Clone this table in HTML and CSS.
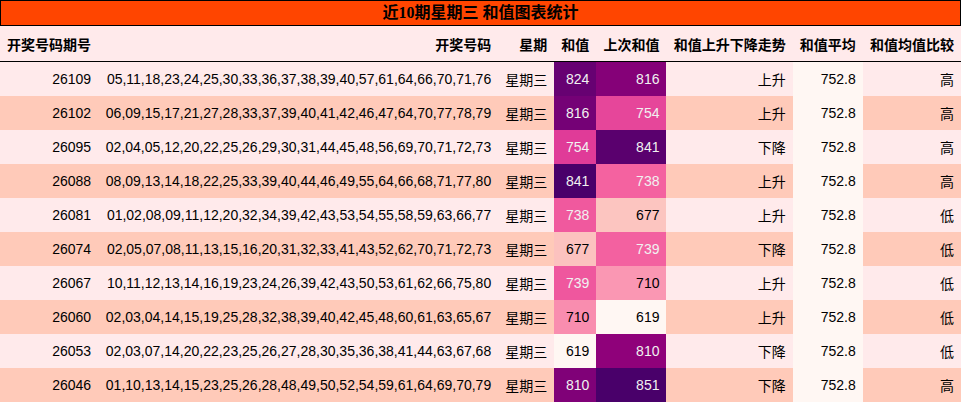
FILE: index.html
```html
<!DOCTYPE html>
<html lang="zh">
<head>
<meta charset="utf-8">
<title>近10期星期三 和值图表统计</title>
<link rel="stylesheet" href="styles.css">
</head>
<body>
<table class="stats">
  <thead>
    <tr><th class="title" colspan="8">近10期星期三 和值图表统计</th></tr>
    <tr class="head">
      <th class="left">开奖号码期号</th>
      <th>开奖号码</th>
      <th>星期</th>
      <th>和值</th>
      <th>上次和值</th>
      <th>和值上升下降走势</th>
      <th>和值平均</th>
      <th>和值均值比较</th>
    </tr>
  </thead>
  <tbody>
    <tr><td>26109</td><td>05,11,18,23,24,25,30,33,36,37,38,39,40,57,61,64,66,70,71,76</td><td>星期三</td><td class="light" style="background:#670172">824</td><td class="light" style="background:#850178">816</td><td>上升</td><td class="avg">752.8</td><td>高</td></tr>
    <tr><td>26102</td><td>06,09,15,17,21,27,28,33,37,39,40,41,42,46,47,64,70,77,78,79</td><td>星期三</td><td class="light" style="background:#750176">816</td><td class="light" style="background:#e6469a">754</td><td>上升</td><td class="avg">752.8</td><td>高</td></tr>
    <tr><td>26095</td><td>02,04,05,12,20,22,25,26,29,30,31,44,45,48,56,69,70,71,72,73</td><td>星期三</td><td class="light" style="background:#e03b98">754</td><td class="light" style="background:#5a006e">841</td><td>下降</td><td class="avg">752.8</td><td>高</td></tr>
    <tr><td>26088</td><td>08,09,13,14,18,22,25,33,39,40,44,46,49,55,64,66,68,71,77,80</td><td>星期三</td><td class="light" style="background:#49006a">841</td><td class="light" style="background:#f462a0">738</td><td>上升</td><td class="avg">752.8</td><td>高</td></tr>
    <tr><td>26081</td><td>01,02,08,09,11,12,20,32,34,39,42,43,53,54,55,58,59,63,66,77</td><td>星期三</td><td class="light" style="background:#f0599e">738</td><td style="background:#fcc5c0">677</td><td>上升</td><td class="avg">752.8</td><td>低</td></tr>
    <tr><td>26074</td><td>02,05,07,08,11,13,15,16,20,31,32,33,41,43,52,62,70,71,72,73</td><td>星期三</td><td style="background:#fcc2bf">677</td><td class="light" style="background:#f361a0">739</td><td>下降</td><td class="avg">752.8</td><td>低</td></tr>
    <tr><td>26067</td><td>10,11,12,13,14,16,19,23,24,26,39,42,43,50,53,61,62,66,75,80</td><td>星期三</td><td class="light" style="background:#ef579e">739</td><td style="background:#fa97b3">710</td><td>上升</td><td class="avg">752.8</td><td>低</td></tr>
    <tr><td>26060</td><td>02,03,04,14,15,19,25,28,32,38,39,40,42,45,48,60,61,63,65,67</td><td>星期三</td><td style="background:#f98daf">710</td><td style="background:#fff7f3">619</td><td>上升</td><td class="avg">752.8</td><td>低</td></tr>
    <tr><td>26053</td><td>02,03,07,14,20,22,23,25,26,27,28,30,35,36,38,41,44,63,67,68</td><td>星期三</td><td style="background:#fff7f3">619</td><td class="light" style="background:#8f017a">810</td><td>下降</td><td class="avg">752.8</td><td>低</td></tr>
    <tr><td>26046</td><td>01,10,13,14,15,23,25,26,28,48,49,50,52,54,59,61,64,69,70,79</td><td>星期三</td><td class="light" style="background:#800178">810</td><td class="light" style="background:#49006a">851</td><td>下降</td><td class="avg">752.8</td><td>高</td></tr>
  </tbody>
</table>
</body>
</html>
```

FILE: styles.css
```css
html, body {
  margin: 0;
  padding: 0;
  background: #ffffff;
}

.stats {
  width: 961px;
  border-collapse: separate;
  border-spacing: 0;
  font-family: "Liberation Sans", "Noto Sans CJK SC", sans-serif;
  font-size: 14px;
  color: #000000;
  white-space: nowrap;
}

.stats th.title {
  background: #ff4500;
  border: 1px solid #000000;
  height: 24px;
  padding: 0;
  text-align: center;
  font-family: "Liberation Serif", "Noto Sans CJK SC", serif;
  font-size: 16px;
  font-weight: bold;
  line-height: 24px;
}

.stats tr.head th {
  background: #ffeaeb;
  border-bottom: 1px solid #000000;
  height: 35px;
  padding: 0 7px;
  text-align: right;
  font-weight: bold;
  font-size: 14px;
}

.stats tr.head th.left {
  text-align: left;
}

.stats td {
  height: 34px;
  padding: 0 7px;
  text-align: right;
  vertical-align: middle;
}

.stats tbody tr:nth-child(odd) td {
  background: #ffeaeb;
}

.stats tbody tr:nth-child(even) td {
  background: #ffcab9;
}

.stats tbody tr td.avg {
  background: #fff7f3;
}

.stats td.light {
  color: #f1f1f1;
}
```
